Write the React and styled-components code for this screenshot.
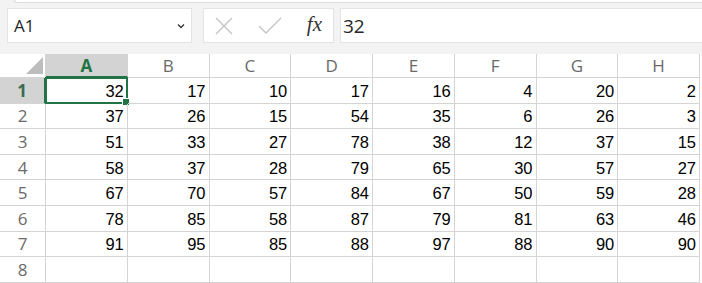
import React from "react";
import styled, { createGlobalStyle } from "styled-components";

const GlobalStyle = createGlobalStyle`
  html, body {
    margin: 0;
    padding: 0;
    background: #ffffff;
  }
  body {
    font-family: "Liberation Sans", Arial, sans-serif;
    overflow: hidden;
  }
`;

const COLS = ["A", "B", "C", "D", "E", "F", "G", "H"];
const DATA = [
  [32, 17, 10, 17, 16, 4, 20, 2],
  [37, 26, 15, 54, 35, 6, 26, 3],
  [51, 33, 27, 78, 38, 12, 37, 15],
  [58, 37, 28, 79, 65, 30, 57, 27],
  [67, 70, 57, 84, 67, 50, 59, 28],
  [78, 85, 58, 87, 79, 81, 63, 46],
  [91, 95, 85, 88, 97, 88, 90, 90],
  ["", "", "", "", "", "", "", ""],
];

const Page = styled.div`
  width: 702px;
  height: 283px;
  overflow: hidden;
  background: #ffffff;
`;

const Toolbar = styled.div`
  background: #f3f3f3;
  height: 54px;
  display: flex;
  flex-direction: column;
`;

const RibbonEdge = styled.div`
  height: 2px;
  margin-left: 14px;
  background: #ffffff;
  border-bottom: 1px solid #dcdcdc;
  border-left: 1px solid #dcdcdc;
  border-bottom-left-radius: 8px;
`;

const FormulaRow = styled.div`
  display: flex;
  align-items: stretch;
  height: 35px;
  margin-top: 5px;
  padding-left: 7px;
`;

const Box = styled.div`
  background: #ffffff;
  border: 1px solid #e3e3e3;
  box-sizing: border-box;
  display: flex;
  align-items: center;
`;

const NameBox = styled(Box)`
  width: 185px;
  padding: 0 5px 0 6px;
  justify-content: space-between;
  font-family: "Open Sans", "Noto Sans", sans-serif;
  font-size: 17px;
  color: #262626;
`;

const FxBox = styled(Box)`
  width: 131px;
  margin-left: 11px;
  padding: 0 10px 0 10px;
  justify-content: space-between;
`;

const InputBox = styled(Box)`
  flex: 1;
  margin-left: 6px;
  border-right: none;
  padding-left: 2px;
  font-family: "Open Sans", "Noto Sans", sans-serif;
  font-size: 19px;
  color: #262626;
`;

const Fx = styled.span`
  font-family: "Liberation Serif", "DejaVu Serif", serif;
  font-style: italic;
  font-size: 21px;
  color: #333333;
  margin-right: 1px;
  margin-top: -3px;
`;

const Grid = styled.div`
  display: grid;
  grid-template-columns: 46px repeat(8, 81.75px);
  grid-template-rows: 24px repeat(8, 25.6px);
`;

const Corner = styled.div`
  background: #ffffff;
  border-right: 1px solid #d4d4d4;
  border-bottom: 1px solid #d4d4d4;
  box-sizing: border-box;
  position: relative;
  overflow: hidden;
`;

const CornerTriangle = styled.div`
  position: absolute;
  right: 2px;
  bottom: 3px;
  width: 0;
  height: 0;
  border-left: 17px solid transparent;
  border-bottom: 17px solid #bdbdbd;
`;

const ColHead = styled.div`
  box-sizing: border-box;
  display: flex;
  align-items: center;
  justify-content: center;
  font-family: "Open Sans", "Noto Sans", sans-serif;
  font-size: 17px;
  background: ${(p) => (p.$active ? "#d3d3d3" : "#ffffff")};
  color: ${(p) => (p.$active ? "#217346" : "#6a6a6a")};
  font-weight: ${(p) => (p.$active ? 700 : 400)};
  border-right: 1px solid #d4d4d4;
  border-bottom: ${(p) => (p.$active ? "2px solid #217346" : "1px solid #d4d4d4")};
`;

const RowHead = styled.div`
  box-sizing: border-box;
  display: flex;
  align-items: center;
  justify-content: center;
  font-family: "Open Sans", "Noto Sans", sans-serif;
  font-size: 17px;
  background: ${(p) => (p.$active ? "#d3d3d3" : "#ffffff")};
  color: ${(p) => (p.$active ? "#3c6b4f" : "#6a6a6a")};
  font-weight: ${(p) => (p.$active ? 700 : 400)};
  border-bottom: 1px solid #d4d4d4;
  border-right: ${(p) => (p.$active ? "2px solid #217346" : "1px solid #d4d4d4")};
`;

const Cell = styled.div`
  box-sizing: border-box;
  display: flex;
  align-items: center;
  justify-content: flex-end;
  padding-right: 3px;
  font-family: "Liberation Sans", Arial, sans-serif;
  font-size: 16.5px;
  color: #000000;
  border-right: 1px solid #d4d4d4;
  border-bottom: 1px solid #d4d4d4;
  position: relative;
`;

const Selection = styled.div`
  position: absolute;
  left: -1px;
  top: -1px;
  right: -1px;
  bottom: -1px;
  border: 2px solid #217346;
  pointer-events: none;
`;

const Handle = styled.div`
  position: absolute;
  right: -4px;
  bottom: -4px;
  width: 6px;
  height: 6px;
  background: #217346;
  border: 1px solid #ffffff;
`;

const CellText = styled.span`
  position: relative;
  top: 1px;
`;

const Chevron = () => (
  <svg width="10" height="10" viewBox="0 0 10 10">
    <path d="M2 3.5 L5 6.5 L8 3.5" fill="none" stroke="#333" strokeWidth="1.3" />
  </svg>
);

const CancelIcon = () => (
  <svg width="20" height="20" viewBox="0 0 20 20">
    <path d="M2 2 L18 18 M18 2 L2 18" stroke="#c4c4c4" strokeWidth="1.4" fill="none" />
  </svg>
);

const EnterIcon = () => (
  <svg width="24" height="20" viewBox="0 0 24 20">
    <path d="M1 10 L8 17 L23 2" stroke="#c4c4c4" strokeWidth="1.4" fill="none" />
  </svg>
);

export default function App() {
  return (
    <Page>
      <GlobalStyle />
      <Toolbar>
        <RibbonEdge />
        <FormulaRow>
          <NameBox>
            <span>A1</span>
            <Chevron />
          </NameBox>
          <FxBox>
            <CancelIcon />
            <EnterIcon />
            <Fx>fx</Fx>
          </FxBox>
          <InputBox>32</InputBox>
        </FormulaRow>
      </Toolbar>
      <Grid>
        <Corner>
          <CornerTriangle />
        </Corner>
        {COLS.map((c, i) => (
          <ColHead key={c} $active={i === 0}>
            {c}
          </ColHead>
        ))}
        {DATA.map((row, r) => (
          <React.Fragment key={r}>
            <RowHead $active={r === 0}>{r + 1}</RowHead>
            {row.map((v, c) => (
              <Cell key={c}>
                <CellText>{v}</CellText>
                {r === 0 && c === 0 && (
                  <Selection>
                    <Handle />
                  </Selection>
                )}
              </Cell>
            ))}
          </React.Fragment>
        ))}
      </Grid>
    </Page>
  );
}
